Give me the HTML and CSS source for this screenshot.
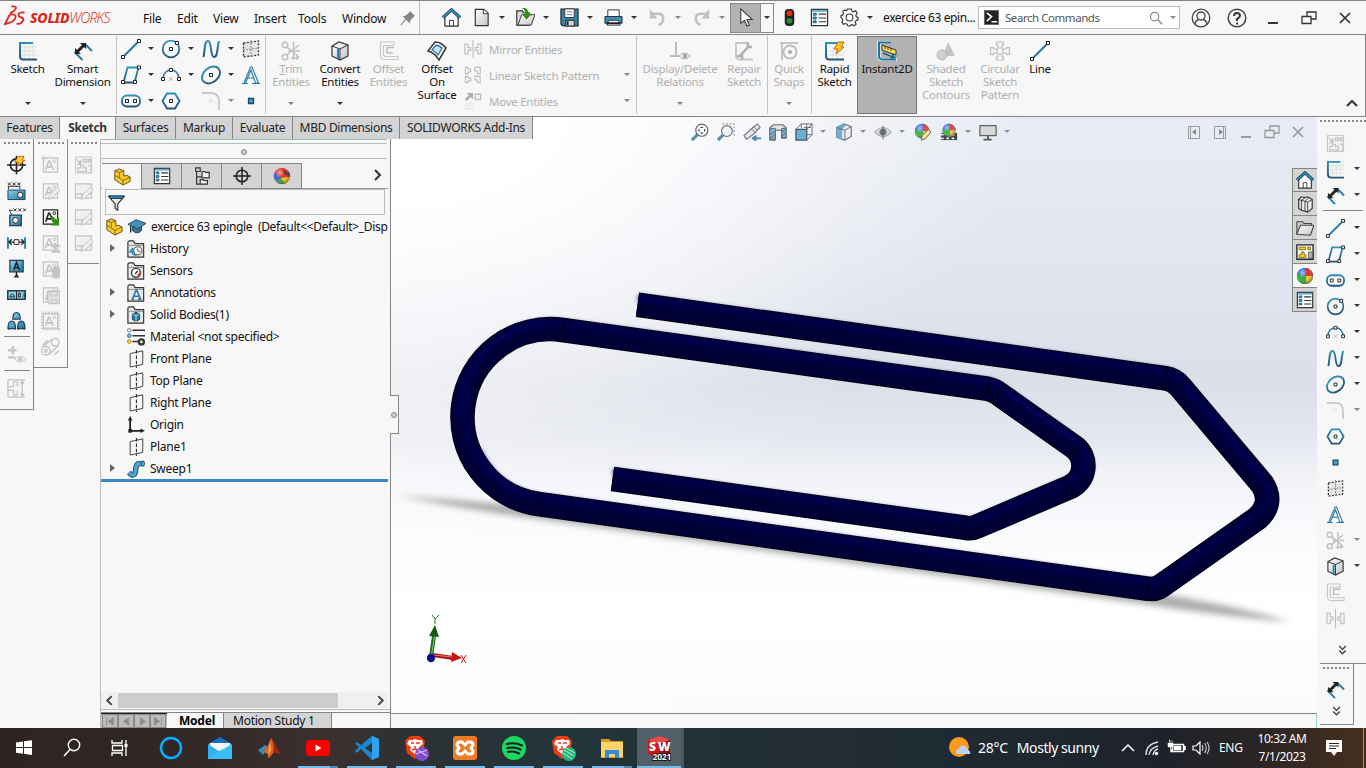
FILE: index.html
```html
<!DOCTYPE html>
<html lang="en">
<head>
<meta charset="utf-8">
<title>SOLIDWORKS - exercice 63 epingle</title>
<link rel="stylesheet" href="styles.css">
</head>
<body>
<svg class="sprite" aria-hidden="true">
<defs>
<linearGradient id="gb" x1="0" y1="0" x2="0" y2="1"><stop offset="0" stop-color="#2f8fb8"/><stop offset="1" stop-color="#245477"/></linearGradient>
<linearGradient id="gf" x1="0" y1="0" x2="1" y2="1"><stop offset="0" stop-color="#8fd0ec"/><stop offset="1" stop-color="#21739c"/></linearGradient>
<linearGradient id="gw" x1="0" y1="0" x2="1" y2="1"><stop offset="0" stop-color="#fff"/><stop offset="1" stop-color="#c4c4c4"/></linearGradient>
<radialGradient id="shine" cx=".35" cy=".3" r=".8"><stop offset="0" stop-color="#fff" stop-opacity=".6"/><stop offset=".4" stop-color="#fff" stop-opacity="0"/><stop offset="1" stop-color="#000" stop-opacity=".6"/></radialGradient>
</defs>
<symbol id="sketch" viewBox="0 0 20 20"><path d="M7 2v17M11 2v17M15 2v17M2 6h17M2 10h17M2 14h17" stroke="#dedede" fill="none"/><path d="M15 2H2v13q0 3.500 3.500 3.500H19" stroke="url(#gb)" stroke-width="2" fill="none"/></symbol>
<symbol id="dim" viewBox="0 0 20 20"><path d="M12 3l7 7M1.500 11l8 8" stroke="#2678a3" stroke-width="2"/><path d="M4 11l7-7" stroke="#222" stroke-width="3"/><path d="M2 7v6h6zM7 2h6v6z" fill="#222"/></symbol>
<symbol id="line" viewBox="0 0 20 20"><path d="M3 17L17 3" stroke="#2678a3" stroke-width="2"/><path d="M.5 16.500h3v3h-3zM16.500.5h3v3h-3z" fill="#fff" stroke="#222"/></symbol>
<symbol id="circle" viewBox="0 0 20 20"><circle cx="10" cy="10" r="8.300" fill="none" stroke="url(#gb)" stroke-width="1.800"/><path d="M8.500 8.500h3v3h-3zM14.500 2.500h3v3h-3z" fill="#fff" stroke="#222"/></symbol>
<symbol id="spline" viewBox="0 0 20 20"><path d="M2.500 18C4 12 3 2 7 2s2 16 6 16 3-10 5-16" fill="none" stroke="url(#gb)" stroke-width="2"/></symbol>
<symbol id="sgrid" viewBox="0 0 20 20"><path d="M2.500 4l15-2v14l-15 2z" fill="#e6e6e6" stroke="#333" stroke-width="1.300" stroke-dasharray="2 1.500"/><path d="M10 1v18M2 11l16-2" stroke="#888" stroke-dasharray="2 1"/></symbol>
<symbol id="rect" viewBox="0 0 20 20"><path d="M6.500 2.500h11l-4 15h-11z" fill="none" stroke="url(#gb)" stroke-width="1.800"/><path d="M.5 15.500h3v3h-3zM12.500 15.500h3v3h-3zM16.500 1h3v3h-3z" fill="#fff" stroke="#222"/></symbol>
<symbol id="arc" viewBox="0 0 20 20"><path d="M2 14C2 2 18 2 18 14" fill="none" stroke="#2678a3" stroke-width="1.500"/><path d="M8 12l4 4m0-4l-4 4" stroke="#bbb"/><path d="M.5 12.500h3v3h-3zM16.500 12.500h3v3h-3zM8.500 3.500h3v3h-3z" fill="#fff" stroke="#222"/></symbol>
<symbol id="ellipse" viewBox="0 0 20 20"><ellipse cx="10" cy="10" rx="10" ry="7.300" transform="rotate(-40 10 10)" fill="none" stroke="url(#gb)" stroke-width="1.900"/><path d="M8.500 8.500h3v3h-3z" fill="#fff" stroke="#222"/></symbol>
<symbol id="atext" viewBox="0 0 20 20"><path d="M1 18.500h6M11 18.500h8M3 18L9.500 2h1.500L17.500 18h-3L10 5 4.500 18M6.500 13h6" fill="none" stroke="#2678a3" stroke-width="1.100"/></symbol>
<symbol id="slot" viewBox="0 0 20 20"><rect x="1" y="4.500" width="18" height="11" rx="5" fill="none" stroke="url(#gb)" stroke-width="1.900"/><path d="M4.500 8.500h3v3h-3zM12.500 8.500h3v3h-3z" fill="#fff" stroke="#222"/></symbol>
<symbol id="poly" viewBox="0 0 20 20"><path d="M1.500 10L6 2.500h8L18.500 10 14 17.500H6z" fill="none" stroke="url(#gb)" stroke-width="1.900"/><path d="M8.500 8.500h3v3h-3z" fill="#fff" stroke="#222"/></symbol>
<symbol id="fillet" viewBox="0 0 20 20"><path d="M1 2h9q8 0 8 9v8" fill="none" stroke="#c8c8c8" stroke-width="1.800"/><path d="M8 8l4 4m0-4l-4 4" stroke="#ddd"/></symbol>
<symbol id="point" viewBox="0 0 20 20"><path d="M7.500 7.500h5v5h-5z" fill="#46a0cc" stroke="#1c4560" stroke-width="1.300"/></symbol>
<symbol id="trim" viewBox="0 0 20 20"><g fill="none" stroke="#c2c2c2" stroke-width="1.600"><circle cx="4" cy="4" r="2.700"/><circle cx="4" cy="16" r="2.700"/><path d="M6 6l12 10M6 14L18 4M12.500 1v18M7 10h12M10 17h8M16 14v5"/></g></symbol>
<symbol id="cube" viewBox="0 0 20 20"><path d="M2 5l7-4 9 3v11l-8 4-8-4z" fill="url(#gw)" stroke="#333" stroke-width="1.200"/><path d="M2 5l8 3 8-4M10 8v11" fill="none" stroke="#333"/><path d="M8 8v10" stroke="#2488b6" stroke-width="2"/></symbol>
<symbol id="offset" viewBox="0 0 20 20"><path d="M15 1H1.500v13.500q0 4 4 4H19v-3H7q-2.500 0-2.500-2.500V4.500H15z" fill="none" stroke="#c8c8c8" stroke-width="1.200"/><path d="M15 6.500H8V12h6" fill="none" stroke="#bcbcbc" stroke-width="1.500"/></symbol>
<symbol id="offsurf" viewBox="0 0 20 20"><path d="M1 10L8 1q6 0 11 6l-7 12Q8 12 1 10z" fill="#fff" stroke="#333" stroke-width="1.500"/><path d="M5 9l4-5q4 1 6 3l-4 7q-2-3-6-5z" fill="#cde7f4" stroke="#2678a3" stroke-width="1.300"/></symbol>
<symbol id="mirror" viewBox="0 0 20 20"><path d="M10 0v20M1 4.500h3.500v4h3v3h-3v4H1zM19 4.500h-3.500v4h-3v3h3v4H19z" fill="none" stroke="#bdbdbd" stroke-width="1.200"/></symbol>
<symbol id="linpat" viewBox="0 0 20 20"><path d="M1.500 1.500h3v2h3v3h-3v2h-3zM12 1.500h6v7h-3v-3h-3zM1.500 11.500h3v2h3v3h-3v2h-3zM12 11.500h6v7h-3v-3h-3z" fill="none" stroke="#bdbdbd" stroke-width="1.200"/></symbol>
<symbol id="move" viewBox="0 0 20 20"><path d="M12.500 2.500h6v6h-6z" fill="none" stroke="#bbb" stroke-width="1.500"/><path d="M2 9l5-5" stroke="#aaa" stroke-width="3"/><path d="M3 1h7v7z" fill="#aaa"/><path d="M2 12h7v7H2zM2 15h7M5 12v7" fill="none" stroke="#d8d8d8" stroke-dasharray="1 1"/></symbol>
<symbol id="disp" viewBox="0 0 20 20"><path d="M6 1v14M0 15h11" stroke="#bbb" stroke-width="1.900"/><path d="M9 15q5-6 11 0-6 6-11 0z" fill="#f7f7f7" stroke="#aaa"/><circle cx="15" cy="15" r="2.300" fill="#aaa"/></symbol>
<symbol id="repair" viewBox="0 0 20 20"><path d="M15 2H2v13q0 3.500 3.500 3.500H19" stroke="#c5c5c5" stroke-width="1.800" fill="none"/><path d="M6 15l8-9m0 0V2m0 4h4M3 15h5v3" stroke="#b0b0b0" stroke-width="2.600" fill="none"/></symbol>
<symbol id="quick" viewBox="0 0 20 20"><path d="M1 2h18M3 1v18" stroke="#c5c5c5" stroke-width="2"/><circle cx="11" cy="11" r="6.500" fill="none" stroke="#bbb" stroke-width="1.800"/><circle cx="11" cy="11" r="2" fill="#aaa"/></symbol>
<symbol id="rapid" viewBox="0 0 20 20"><path d="M8 6v13M12 2v17M2 10h17M2 14h17" stroke="#ddd"/><path d="M12 2H1v13q0 3.500 3.500 3.500H19" stroke="url(#gb)" stroke-width="2" fill="none"/><path d="M13 1h6l-3 5h3l-8 7 2-5H9z" fill="#ffcd1c" stroke="#d45a17"/></symbol>
<symbol id="instant" viewBox="0 0 20 20"><path d="M14 1H2v14q0 4 4 4h14" stroke="#e8f3f9" stroke-width="3.500" fill="none"/><path d="M14 1.500H2V15q0 3.500 3.500 3.500H19" stroke="#24739d" stroke-width="2" fill="none"/><path d="M5 4l14 5v5L5 9z" fill="#ffe35a" stroke="#333"/><path d="M8 5v3m3-2v3m3-2v3" stroke="#333"/><path d="M6 11l9 4v-3l4 5-6 1 1-2-8-3z" fill="#1e618a"/></symbol>
<symbol id="shaded" viewBox="0 0 20 20"><path d="M12 1l7 14H7z" fill="#c2c2c2"/><circle cx="6" cy="14" r="5" fill="#cfcfcf" stroke="#b9b9b9"/></symbol>
<symbol id="circpat" viewBox="0 0 20 20"><path d="M6.500 1h7v3H12v3H8V4H6.500zM6.500 19h7v-3H12v-3H8v3H6.500zM.5 6.500v7h3V12H7V8H3.500V6.500zM19.500 6.500v7h-3V12H13V8h3.500V6.500z" fill="none" stroke="#bcbcbc" stroke-width="1.200"/></symbol>
<symbol id="home" viewBox="0 0 20 20"><path d="M3 9v10h14V9l-7-7z" fill="#fff" stroke="#333" stroke-width="1.300"/><path d="M1 10l9-8 9 8" fill="none" stroke="#17405a" stroke-width="3.400"/><path d="M1 10l9-8 9 8" fill="none" stroke="#3c9bc6" stroke-width="1.400"/><path d="M8 19v-6h4v6" fill="none" stroke="#333"/></symbol>
<symbol id="new" viewBox="0 0 20 20"><path d="M3.500 1.500h9l4.500 4v13H3.500z" fill="url(#gw)" stroke="#333" stroke-width="1.200"/><path d="M12 1.500v4.500h5" fill="#fff" stroke="#333"/></symbol>
<symbol id="open" viewBox="0 0 20 20"><path d="M.8 18V3h6l1 2h6v13z" fill="#ddd" stroke="#333" stroke-width="1.200"/><path d="M2 18L6 7h14l-4 11z" fill="url(#gw)" stroke="#333"/><path d="M6 0q7-1 7 6h4l-6 6-5-6h4q0-4-4-6z" fill="#2f9210"/></symbol>
<symbol id="save" viewBox="0 0 20 20"><path d="M1 1h18v18H3l-2-2z" fill="#3484ab" stroke="#222" stroke-width="1.200"/><path d="M5 1h10v9H5z" fill="#fff" stroke="#333"/><path d="M7 4h6M7 7h6" stroke="#777"/><path d="M6 13h9v6H6z" fill="#d5d5d5" stroke="#222"/><path d="M8 14v4" stroke="#222" stroke-width="2"/></symbol>
<symbol id="print" viewBox="0 0 20 20"><path d="M4 2h12v8H4z" fill="#fff" stroke="#333"/><path d="M1 9h18v7H1z" fill="#3c91bd" stroke="#222"/><path d="M5 13h10l2 5H3z" fill="#fff" stroke="#333"/><path d="M3 16h14" stroke="#123" stroke-width="2"/></symbol>
<symbol id="undo" viewBox="0 0 20 20"><path d="M4 6h6q6 0 6 5t-5 7" fill="none" stroke="#c0c0c0" stroke-width="2.600"/><path d="M2 1v10h8z" fill="#c0c0c0"/></symbol>
<symbol id="cursor" viewBox="0 0 20 20"><path d="M5 1v15l4-3 2.500 6 2.500-1-2.500-6H17z" fill="#fff" stroke="#333" stroke-width="1.100"/></symbol>
<symbol id="traffic" viewBox="0 0 20 20"><rect x="5" y="1" width="10" height="18" rx="4" fill="#222"/><circle cx="10" cy="5.500" r="3" fill="#ee2b12"/><circle cx="10" cy="13.500" r="3" fill="#28902b"/></symbol>
<symbol id="list" viewBox="0 0 20 20"><path d="M1.500 1.500h17v17h-17z" fill="#fff" stroke="#333" stroke-width="1.300"/><path d="M2 2h16v2H2z" fill="#5fb0d4"/><path d="M3.500 5.500h3v2h-3zM3.500 9.500h3v2h-3zM3.500 13.500h3v2h-3z" fill="#4ba6ce" stroke="#1b5d80"/><path d="M9 6.500h8M9 10.500h8M9 14.500h8" stroke="#333" stroke-width="1.200"/></symbol>
<symbol id="gear" viewBox="0 0 20 20"><path d="M8 1h4l.6 2.200 1.700.8L16.500 3 18 5.500l-1.300 2 .3 1.500 2 1v2.500l-2.200.8-.8 1.700 1 2-2 1.700-2-1.200-1.700.5L10.500 19h-2l-1-2-1.700-.7-2.300.8L2 15l1-2-.5-1.500L1 10V8l2-.7.7-1.600L3 3.500 5 2l1.800 1z" fill="#fff" stroke="#333" stroke-width="1.200"/><circle cx="10" cy="10" r="3.600" fill="none" stroke="#333" stroke-width="1.100"/></symbol>
<symbol id="search" viewBox="0 0 20 20"><circle cx="8" cy="8" r="6" fill="none" stroke="currentColor" stroke-width="1.700"/><path d="M12.500 12.500L19 19" stroke="currentColor" stroke-width="2"/></symbol>
<symbol id="user" viewBox="0 0 20 20"><circle cx="10" cy="10" r="8.800" fill="none" stroke="#444" stroke-width="1.300"/><circle cx="10" cy="8" r="4" fill="none" stroke="#444" stroke-width="1.300"/><path d="M4 16q1-4 4-4.500M16 16q-1-4-4-4.500" fill="none" stroke="#444" stroke-width="1.300"/></symbol>
<symbol id="help" viewBox="0 0 20 20"><circle cx="10" cy="10" r="8.800" fill="none" stroke="#444" stroke-width="1.500"/><path d="M7 8q0-3 3-3t3 2.600q0 1.700-3 3.200V13M10 14.500v2" fill="none" stroke="#333" stroke-width="1.900"/></symbol>
<symbol id="min" viewBox="0 0 20 20"><path d="M5 15h10" stroke="currentColor" stroke-width="2"/></symbol>
<symbol id="restore" viewBox="0 0 20 20"><path d="M3 8.500h9v7H3zM8 8V4h9v7h-5" fill="none" stroke="currentColor" stroke-width="1.300"/></symbol>
<symbol id="close" viewBox="0 0 20 20"><path d="M5 5l10 10M15 5L5 15" stroke="currentColor" stroke-width="1.700"/></symbol>
<symbol id="part" viewBox="0 0 20 20"><path d="M2 3l5-2 5 2v6l3-1 4 2v5l-8 4-9-6z" fill="#f8c92b" stroke="#5d4a10"/><path d="M2 3l5 2 5-2M7 5v6l4 3 8-4M11 14v5M2 8l5 3" fill="none" stroke="#7c6315"/></symbol>
<symbol id="conf" viewBox="0 0 20 20"><path d="M3 1h5v4H3zM4 5v14h5M4 11h6" fill="none" stroke="#333" stroke-width="1.300"/><path d="M10 5h3l1 1h4v6h-8zM8 14h3l1 1h4v4H8z" fill="#eee" stroke="#333" stroke-width="1.300"/></symbol>
<symbol id="target" viewBox="0 0 20 20"><circle cx="10" cy="10" r="6.500" fill="none" stroke="#222" stroke-width="1.700"/><path d="M10 0v20M0 10h20" stroke="#222" stroke-width="1.700"/></symbol>
<symbol id="ball" viewBox="0 0 20 20"><circle cx="10" cy="10" r="9" fill="#2464d2"/><path d="M11 10V1q7 1 8 9z" fill="#e12b20"/><path d="M11 10V1Q3 1 1.500 8z" fill="#2f62dc"/><path d="M11 10h8q-1 8-8 9z" fill="#f5d020"/><path d="M11 10L1.300 8Q0 17 9 19h2z" fill="#2cab35"/><circle cx="10" cy="10" r="9" fill="url(#shine)"/></symbol>
<symbol id="ballapp" viewBox="0 0 20 20"><circle cx="10" cy="10" r="9" fill="#e12b20"/><path d="M9 12L2 6q-3 7 2 10z" fill="#2f62dc"/><path d="M9 12l-5 4q4 4 9 3z" fill="#2cab35"/><path d="M9 12l4 7q6-2 6-8z" fill="#f5d020"/><path d="M11 4l7 2 1 5-5-3z" fill="#333"/><circle cx="10" cy="10" r="9" fill="url(#shine)"/></symbol>
<symbol id="funnel" viewBox="0 0 20 20"><path d="M2 3h17l-7 8v7l-3-2v-5z" fill="url(#gw)" stroke="#333" stroke-width="1.300"/><path d="M2 2h17l-2 3H4z" fill="#2d85ad" stroke="#234"/></symbol>
<symbol id="cap" viewBox="0 0 20 20"><path d="M5 9v5q5 5 10 0V9" fill="#2c759b" stroke="#17425c"/><path d="M0 7l9-5 11 4-9 6z" fill="#4590b5" stroke="#17425c"/><path d="M3 9v7" stroke="#222" stroke-width="1.500"/></symbol>
<symbol id="folder" viewBox="0 0 20 20"><path d="M1 19V3q0-2 2-2h4l2 3h9.500v15z" fill="#e9e9e9" stroke="#333" stroke-width="1.300"/><path d="M1 6h17" stroke="#888"/></symbol>
<symbol id="fhist" viewBox="0 0 20 20"><use href="#folder"/><circle cx="12" cy="12" r="4.500" fill="#fff" stroke="#333"/><path d="M12 9.500V12l3 1.500" fill="none" stroke="#333"/><path d="M5.500 12q0 5 5 5M3 13h4.500L6 9.500z" stroke="#2488b6" stroke-width="1.500" fill="none"/></symbol>
<symbol id="fsens" viewBox="0 0 20 20"><use href="#folder"/><circle cx="10" cy="12" r="5" fill="#fff" stroke="#333" stroke-width="1.500"/><path d="M9 13l3-3" stroke="#333" stroke-width="1.500"/><path d="M12 15l3-3" stroke="#e33b1d" stroke-width="2"/></symbol>
<symbol id="fann" viewBox="0 0 20 20"><use href="#folder"/><path d="M5 17h3m4 0h4M6 17l4-10h1l4 10M8 13.500h5" stroke="#2678a3" stroke-width="1.700" fill="none"/></symbol>
<symbol id="fbody" viewBox="0 0 20 20"><use href="#folder"/><path d="M6 9l4-2 4 2v6l-4 2-4-2z" fill="#2678a3" stroke="#153a50"/><path d="M6 9l4 2 4-2m-4 2v6" fill="none" stroke="#bfe3f3"/></symbol>
<symbol id="mat" viewBox="0 0 20 20"><path d="M6 2.500h14M6 8.500h14M6 15h8" stroke="#333" stroke-width="1.700"/><circle cx="2.500" cy="2.500" r="2" fill="#fff" stroke="#777"/><circle cx="2.500" cy="8.500" r="2" fill="#6dbfe4" stroke="#1f6d95"/><circle cx="2.500" cy="15" r="2" fill="#ffd42a" stroke="#a57c0a"/><circle cx="16" cy="15.500" r="2.800" fill="none" stroke="#333" stroke-width="2.500"/></symbol>
<symbol id="plane" viewBox="0 0 20 20"><path d="M3.500 4l14-3v15l-14 3z" fill="none" stroke="#333"/><path d="M10.500 0v20" stroke="#333" stroke-width="1.300" stroke-dasharray="4 2"/></symbol>
<symbol id="origin" viewBox="0 0 20 20"><path d="M3.500 2v14.500h13" fill="none" stroke="#222" stroke-width="2"/><path d="M1 5l2.500-5L6 5zM15 14l5 2.500-5 2.500z" fill="#222"/><path d="M1.500 14.500h4v4h-4z" fill="#222"/></symbol>
<symbol id="sweep" viewBox="0 0 20 20"><path d="M2 14q4 4 6 2c3-3 0-11 5-12h4" fill="none" stroke="#174a66" stroke-width="6"/><path d="M2 14q4 4 6 2c3-3 0-11 5-12h4" fill="none" stroke="#50a6cd" stroke-width="4"/><ellipse cx="17.500" cy="4" rx="2" ry="3" fill="#50a6cd" stroke="#174a66"/></symbol>
<symbol id="note" viewBox="0 0 20 20"><path d="M2.500 2.500h15v15h-15z" fill="#f4f4f4" stroke="currentColor" stroke-width="1.300"/><path d="M5 15l3-9h1l4 9M6.500 12h5" stroke="currentColor" stroke-width="1.700" fill="none"/><circle cx="14" cy="6" r="1.500" fill="none" stroke="currentColor"/></symbol>
<symbol id="pencil" viewBox="0 0 20 20"><path d="M8 19l1-5 8-8 3 3-8 8z" fill="#eee" stroke="currentColor"/></symbol>
<symbol id="tbl" viewBox="0 0 20 20"><path d="M1.500 2.500h17v15h-17zM1.500 13h17M8 13v5M13 13v5" fill="#f0f0f0" stroke="currentColor" stroke-width="1.200"/></symbol>
<symbol id="notestar" viewBox="0 0 20 20"><use href="#note"/><path d="M3 0v7M0 3h7" stroke="currentColor"/></symbol>
<symbol id="notepen" viewBox="0 0 20 20"><use href="#note"/><use href="#pencil"/></symbol>
<symbol id="notearrow" viewBox="0 0 20 20"><use href="#note"/><path d="M10 11l2-2 4 4 3-3v9h-9l3-3z" fill="#2f9210"/></symbol>
<symbol id="noteplus" viewBox="0 0 20 20"><use href="#note"/><path d="M15 10v7M11 13h9M11 19h9" stroke="currentColor" stroke-width="2.500"/></symbol>
<symbol id="notelight" viewBox="0 0 20 20"><use href="#note"/><rect x="12" y="7" width="8" height="13" rx="3" fill="currentColor"/></symbol>
<symbol id="notesave" viewBox="0 0 20 20"><use href="#note"/><path d="M7 6h13v13H9l-2-2z" fill="#e0e0e0" stroke="currentColor" stroke-width="1.500"/><path d="M10 6v5h7V6M11 19v-4h6v4" fill="none" stroke="currentColor"/></symbol>
<symbol id="stamp" viewBox="0 0 20 20"><use href="#note"/><path d="M1.500 1.500h17v17h-17z" fill="none" stroke="currentColor" stroke-width="3" stroke-dasharray="1.500 1.500"/></symbol>
<symbol id="belt" viewBox="0 0 20 20"><g fill="none" stroke="currentColor" stroke-width="1.500"><circle cx="15" cy="5" r="4"/><circle cx="5" cy="14" r="4.500"/><circle cx="5" cy="14" r="1.500"/><path d="M2 10l9-8M8 18l10-9M2 8l5-5M14 18l5-4"/></g></symbol>
<symbol id="block" viewBox="0 0 20 20"><path d="M1.500 1.500h17v17h-17z" fill="#f2f2f2" stroke="currentColor"/><path d="M10 4h3v3h-3zM15 4h2v3h-2zM4 13h3v-2h3v2h3v4H4zM15 11h3v7h-3" fill="none" stroke="currentColor" stroke-width="1.300"/><path d="M2 2l4 4 2-2v6H3l2-2z" fill="currentColor"/></symbol>
<symbol id="tblpen" viewBox="0 0 20 20"><use href="#tbl"/><use href="#pencil"/></symbol>
<symbol id="bolt" viewBox="0 0 20 20"><use href="#target"/><path d="M12 1h6l-2 4h3l-8 6 1-4H8z" fill="#ffd02a" stroke="#d05917"/></symbol>
<symbol id="xxx1" viewBox="0 0 20 20"><path d="M1 1l3 3m0-3L1 4M6 1l3 3m0-3L6 4M11 1l3 3m0-3l-3 3M1.500 8V5h12v3" stroke="#222" fill="none"/><path d="M1 9h18v10H1z" fill="url(#gf)" stroke="#17405a"/><circle cx="14" cy="14" r="2.800" fill="#fff" stroke="#222"/></symbol>
<symbol id="xxx2" viewBox="0 0 20 20"><path d="M7 1l3 3m0-3L7 4M12 1l3 3m0-3l-3 3M17 1l3 3m0-3l-3 3M2 3h4M3 4l3 5" stroke="#222" fill="none"/><path d="M3 8h12v11H3z" fill="url(#gf)" stroke="#17405a" stroke-width="1.400"/><circle cx="9" cy="13.500" r="3" fill="#fff" stroke="#222"/></symbol>
<symbol id="hdim" viewBox="0 0 20 20"><path d="M1 4v12M19 4v12" stroke="#2488b6" stroke-width="2"/><path d="M2 9h16M5 6L2 9l3 3m10-6l3 3-3 3" stroke="#222" fill="none" stroke-width="1.400"/><path d="M7.500 6.500h5v5h-5z" fill="#fff" stroke="#222"/></symbol>
<symbol id="datum" viewBox="0 0 20 20"><path d="M3 1h14v12H3z" fill="url(#gf)" stroke="#17405a" stroke-width="1.300"/><path d="M7 11l3-8 3 8M8 8.500h4M10 13v4" fill="none" stroke="#222" stroke-width="1.500"/><path d="M7 19l3-4 3 4z" fill="#222"/></symbol>
<symbol id="gtol" viewBox="0 0 20 20"><path d="M.8 5.500h18.400v9H.8z" fill="#8bcbe8" stroke="#17405a" stroke-width="1.600"/><path d="M10 5v10M3 12q2.500-6 5 0zM12 8h2v4h-2zM16 12h.5M18 7.500v5" fill="none" stroke="#222"/></symbol>
<symbol id="group" viewBox="0 0 20 20"><path d="M6 8q0-7 4-7t4 7zM1 18q0-8 4-8t4 8zM11 18q0-8 4-8t4 8z" fill="url(#gf)" stroke="#17405a" stroke-width="1.200"/><path d="M1 18h2m4 0h2m2 0h2m4 0h2" stroke="#17405a" stroke-width="2"/></symbol>
<symbol id="pmeye" viewBox="0 0 20 20"><path d="M6 1v9M1 5.500h9M1 13h8" stroke="currentColor" stroke-width="2.500"/><path d="M8 15q6-6 12 0-6 6-12 0z" fill="#eee" stroke="currentColor"/><circle cx="14" cy="15" r="2" fill="currentColor"/></symbol>
<symbol id="limits" viewBox="0 0 20 20"><path d="M1 1h18M1 19h18M1 1v18M1 8h6V3h4v5M1 12h6v5h4v-5M16 3v14M14 5l2-3 2 3M14 15l2 3 2-3" fill="none" stroke="currentColor" stroke-width="1.400"/></symbol>
<symbol id="zfit" viewBox="0 0 20 20"><path d="M8 12l-7 7" stroke="#4685a5" stroke-width="3.500"/><circle cx="12" cy="8" r="6.700" fill="#fff" stroke="#555" stroke-width="1.300"/><path d="M12 3.500l2 2h-4zM12 12.500l2-2h-4zM7.500 8l2-2v4zM16.500 8l-2-2v4z" fill="#333"/></symbol>
<symbol id="zarea" viewBox="0 0 20 20"><path d="M6 1h13v13" fill="none" stroke="#555" stroke-dasharray="2 2"/><path d="M8 12l-7 7" stroke="#4685a5" stroke-width="3.500"/><circle cx="11" cy="9" r="6" fill="#eef3f6" stroke="#666" stroke-width="1.300"/></symbol>
<symbol id="prev" viewBox="0 0 20 20"><path d="M1 14l10-9 5-4 3 4-8 8-7 5z" fill="#e4e4e4" stroke="#666" stroke-width="1.200"/><path d="M9 6l5 5M12 4l4 4" stroke="#666"/><path d="M20 16h-5v-3l-6 4 6 4v-3h5z" fill="#2e7ea8"/></symbol>
<symbol id="section" viewBox="0 0 20 20"><path d="M1 5l4-3h10l4 3v12h-5V8H7v11H1z" fill="#e2e2e2" stroke="#555" stroke-width="1.200"/><path d="M1 6h6v12H1zM14 6h5v10h-5z" fill="#74b2d0" stroke="#456"/><path d="M2 13l4-4M2 17l4-4M14 15l4-4M14 11l4-4" stroke="#345"/></symbol>
<symbol id="orient" viewBox="0 0 20 20"><path d="M1 7h12v12H1z" fill="#5da8cb" stroke="#345" stroke-width="1.400"/><path d="M1 7l6-6h12v12l-6 6M13 7l6-6M7 1v5M13 1v12M10 5h8M13 13h6" fill="none" stroke="#555"/></symbol>
<symbol id="dstyle" viewBox="0 0 20 20"><path d="M2 5l8-4 8 3v11l-7 4-9-3z" fill="#eee" stroke="#556" stroke-width="1.200"/><path d="M2 5l6 2v11l-6-2zM8 7l5-5-4-1-7 4z" fill="#5fa9cc"/><path d="M2 5l9 3 7-4M11 8v11" fill="none" stroke="#556"/></symbol>
<symbol id="eye" viewBox="0 0 20 20"><path d="M1 10q9-10 18 0-9 10-18 0z" fill="#ddd" stroke="#aaa" stroke-width="1.300"/><circle cx="10" cy="10" r="4" fill="#666b74"/><path d="M10 3v15" stroke="#444"/></symbol>
<symbol id="ballpen" viewBox="0 0 20 20"><use href="#ball" width="18" height="18"/><path d="M8 19l1-5 7-7 3 3-7 8z" fill="#f8e28a" stroke="#444"/></symbol>
<symbol id="scene" viewBox="0 0 20 20"><path d="M1 11h18v8H1z" fill="#333"/><path d="M1 13h18M1 17h18" stroke="#eee" stroke-width="2" stroke-dasharray="3 3"/><use href="#ball" x="2" width="16" height="16"/></symbol>
<symbol id="monitor" viewBox="0 0 20 20"><path d="M1 3h18v11H1z" fill="#d5d5d5" stroke="#555" stroke-width="1.400"/><path d="M10 14v4M5 18.500h9" stroke="#444" stroke-width="2"/></symbol>
<symbol id="pleft" viewBox="0 0 20 20"><path d="M4.500 4.500h11v12h-11zM6.500 4v12" fill="none" stroke="#999"/><path d="M12 7v6l-4-3z" fill="#888"/></symbol>
<symbol id="pright" viewBox="0 0 20 20"><path d="M4.500 4.500h11v12h-11zM13.500 4v12" fill="none" stroke="#999"/><path d="M9 7v6l4-3z" fill="#888"/></symbol>
<symbol id="books" viewBox="0 0 20 20"><path d="M3 5l3-3 4 1 2-1 3 1 3 2v10l-5 4-7-2-3-2z" fill="#eee" stroke="#333" stroke-width="1.300"/><path d="M3 5l10 3 5-3M6 6l4-3M10 7l4-4M6 6v11M10 7v11M13 8v11" fill="none" stroke="#333"/></symbol>
<symbol id="ofolder" viewBox="0 0 20 20"><path d="M1 17V3h6l2 2h8v3" fill="#ccc" stroke="#444" stroke-width="1.200"/><path d="M1 17L5 7h15l-4 11z" fill="url(#gw)" stroke="#444" stroke-width="1.200"/></symbol>
<symbol id="palette" viewBox="0 0 20 20"><path d="M1 2h18v16H1z" fill="#fff" stroke="#222" stroke-width="1.500"/><path d="M3.500 4.500h7v3h-7zM13 4.500h3v3h-3zM6 10h3v3h2v3H3.500v-3H6z" fill="#ffd12b" stroke="#7d6514"/><path d="M14 10h4v7h-4z" fill="#bbb" stroke="#555"/></symbol>
</svg>

<header class="titlebar">
  <div class="brand"><svg class="ds" viewBox="0 0 22 22"><path d="M7.500 1.500q5-.5 4.500 1.500-1 3-6 5M5.500 9.500q7-1 6 3-1.500 5-10.500 6.500L5.500 10M20.500 7.500q-6-.500-6 2t3 3 1 4-6 2" fill="none" stroke="#d8281d" stroke-width="1.800"/></svg><span class="solid">SOLID</span><span class="works">WORKS</span></div>
  <nav class="menus"><span>File</span><span>Edit</span><span>View</span><span>Insert</span><span>Tools</span><span>Window</span></nav>
  <svg class="pin" viewBox="0 0 16 16"><path d="M1 15l5-6M4 6l6 6 1-3 4-4-4-4-4 4z" stroke="#858585" fill="#858585" stroke-width="1.200"/></svg>
  <div class="quick">
    <span class="qi"><svg><use href="#home"/></svg></span>
    <span class="qi"><svg><use href="#new"/></svg></span><i class="dn"></i>
    <span class="qi"><svg><use href="#open"/></svg></span><i class="dn"></i>
    <span class="qi"><svg><use href="#save"/></svg></span><i class="dn"></i>
    <span class="qi"><svg><use href="#print"/></svg></span><i class="dn"></i>
    <span class="qi"><svg><use href="#undo"/></svg></span><i class="dn off"></i>
    <span class="qi"><svg class="flip"><use href="#undo"/></svg></span><i class="dn off"></i>
    <span class="select"><b><svg><use href="#cursor"/></svg></b><i class="dn"></i></span>
    <span class="qi"><svg><use href="#traffic"/></svg></span>
    <span class="qi"><svg><use href="#list"/></svg></span>
    <span class="qi"><svg><use href="#gear"/></svg></span><i class="dn"></i>
  </div>
  <span class="docname">exercice 63 epin...</span>
  <div class="searchbox"><svg class="cmd" viewBox="0 0 16 16"><path d="M.5.500h15v15H.5z" fill="#222" stroke="#666"/><path d="M3 3l5 4-5 5M8 12.500h6" fill="none" stroke="#fff" stroke-width="1.800"/></svg><span>Search Commands</span><svg class="mag"><use href="#search"/></svg><i class="dn off"></i></div>
  <div class="winctl"><svg><use href="#user"/></svg><svg><use href="#help"/></svg><svg><use href="#min"/></svg><svg><use href="#restore"/></svg><svg><use href="#close"/></svg></div>
</header>

<section class="ribbon">
  <div class="rb w55"><svg><use href="#sketch"/></svg><p>Sketch</p><i class="dn"></i></div>
  <div class="rb w55"><svg><use href="#dim"/></svg><p>Smart<br>Dimension</p><i class="dn"></i></div>
  <i class="sep s6"></i>
  <div class="rgrid">
    <svg><use href="#line"/></svg><i class="dn"></i><svg><use href="#circle"/></svg><i class="dn"></i><svg><use href="#spline"/></svg><i class="dn"></i><svg><use href="#sgrid"/></svg>
    <svg><use href="#rect"/></svg><i class="dn"></i><svg><use href="#arc"/></svg><i class="dn"></i><svg><use href="#ellipse"/></svg><i class="dn"></i><svg><use href="#atext"/></svg>
    <svg><use href="#slot"/></svg><i class="dn"></i><svg><use href="#poly"/></svg><i></i><svg><use href="#fillet"/></svg><i class="dn off"></i><svg><use href="#point"/></svg>
  </div>
  <i class="sep s2"></i>
  <div class="rb w50 dis"><svg><use href="#trim"/></svg><p><u>T</u>rim<br>Entities</p><i class="dn off"></i></div>
  <div class="rb w48"><svg><use href="#cube"/></svg><p>Convert<br>Entities</p><i class="dn"></i></div>
  <div class="rb w49 dis"><svg><use href="#offset"/></svg><p>Offset<br>Entities</p></div>
  <div class="rb w48"><svg><use href="#offsurf"/></svg><p>Offset<br>On<br>Surface</p></div>
  <div class="rlist">
    <div><svg><use href="#mirror"/></svg><span>Mirror Entities</span></div>
    <div><svg><use href="#linpat"/></svg><span>Linear Sketch Pattern</span><i class="dn off"></i></div>
    <div><svg><use href="#move"/></svg><span>Move Entities</span><i class="dn off"></i></div>
  </div>
  <i class="sep"></i>
  <div class="rb w86 dis"><svg><use href="#disp"/></svg><p>Display/Delete<br>Relations</p><i class="dn off"></i></div>
  <div class="rb w42 dis"><svg><use href="#repair"/></svg><p>Repair<br>Sketch</p></div>
  <i class="sep s2"></i>
  <div class="rb w42 dis"><svg><use href="#quick"/></svg><p>Quick<br>Snaps</p><i class="dn off"></i></div>
  <i class="sep s1"></i>
  <div class="rb w45"><svg><use href="#rapid"/></svg><p>Rapid<br>Sketch</p></div>
  <div class="rb w60 on"><svg><use href="#instant"/></svg><p>Instant2D</p></div>
  <div class="rb w57 dis"><svg><use href="#shaded"/></svg><p>Shaded<br>Sketch<br>Contours</p></div>
  <div class="rb w50 dis"><svg><use href="#circpat"/></svg><p>Circular<br>Sketch<br>Pattern</p></div>
  <div class="rb w30"><svg><use href="#line"/></svg><p>Line</p></div>
  <svg class="collapse" viewBox="0 0 12 8"><path d="M1 7l5-5 5 5" fill="none" stroke="#333" stroke-width="2"/></svg>
</section>

<main class="work">
  <nav class="tabs"><span>Features</span><span class="cur">Sketch</span><span>Surfaces</span><span>Markup</span><span>Evaluate</span><span>MBD Dimensions</span><span>SOLIDWORKS Add-Ins</span></nav>

  <aside class="bars">
    <div class="bar b1"><i class="grip"></i>
      <svg><use href="#bolt"/></svg><svg><use href="#xxx1"/></svg><svg><use href="#xxx2"/></svg><svg><use href="#hdim"/></svg><svg><use href="#datum"/></svg><svg><use href="#gtol"/></svg><svg><use href="#group"/></svg><i class="hr"></i><svg><use href="#pmeye"/></svg><i class="hr"></i><svg><use href="#limits"/></svg></div>
    <div class="bar b2"><i class="grip"></i>
      <svg><use href="#notestar"/></svg><svg><use href="#notepen"/></svg><svg class="dark"><use href="#notearrow"/></svg><svg><use href="#noteplus"/></svg><svg><use href="#notelight"/></svg><svg><use href="#notesave"/></svg><svg><use href="#stamp"/></svg><svg><use href="#belt"/></svg></div>
    <div class="bar b3"><i class="grip"></i>
      <svg><use href="#block"/></svg><svg><use href="#tblpen"/></svg><svg><use href="#tblpen"/></svg><svg><use href="#tblpen"/></svg></div>
  </aside>

  <aside class="panel">
    <div class="ptop"><i class="knob"></i></div>
    <div class="ptabs"><span class="cur"><svg><use href="#part"/></svg></span><span><svg><use href="#list"/></svg></span><span><svg><use href="#conf"/></svg></span><span><svg><use href="#target"/></svg></span><span><svg><use href="#ballapp"/></svg></span><svg class="more" viewBox="0 0 8 12"><path d="M1 1l5 5-5 5" fill="none" stroke="#333" stroke-width="2"/></svg></div>
    <div class="filter"><svg><use href="#funnel"/></svg></div>
    <div class="root"><svg><use href="#part"/></svg><svg><use href="#cap"/></svg><span>exercice 63 epingle&nbsp; (Default&lt;&lt;Default&gt;_Disp</span></div>
    <ul class="tree">
      <li class="ex"><svg><use href="#fhist"/></svg>History</li>
      <li><svg><use href="#fsens"/></svg>Sensors</li>
      <li class="ex"><svg><use href="#fann"/></svg>Annotations</li>
      <li class="ex"><svg><use href="#fbody"/></svg>Solid Bodies(1)</li>
      <li><svg><use href="#mat"/></svg>Material &lt;not specified&gt;</li>
      <li><svg><use href="#plane"/></svg>Front Plane</li>
      <li><svg><use href="#plane"/></svg>Top Plane</li>
      <li><svg><use href="#plane"/></svg>Right Plane</li>
      <li><svg><use href="#origin"/></svg>Origin</li>
      <li><svg><use href="#plane"/></svg>Plane1</li>
      <li class="ex"><svg><use href="#sweep"/></svg>Sweep1</li>
    </ul>
    <div class="rollback"></div>
    <div class="hscroll"><svg viewBox="0 0 8 10"><path d="M6 1L2 5l4 4" fill="none" stroke="#444" stroke-width="1.800"/></svg><i></i><svg viewBox="0 0 8 10"><path d="M2 1l4 4-4 4" fill="none" stroke="#444" stroke-width="1.800"/></svg></div>
    <div class="btabs"><div class="vcr"><svg viewBox="0 0 16 14"><path d="M4 3v9M12 3v9L6 7.500z"/></svg><svg viewBox="0 0 16 14"><path d="M11 3v9L5 7.500z"/></svg><svg viewBox="0 0 16 14"><path d="M6 3v9l6-4.500z"/></svg><svg viewBox="0 0 16 14"><path d="M12 3v9M4 3v9l6-4.500z"/></svg></div><span class="model">Model</span><span class="motion">Motion Study 1</span></div>
  </aside>

  <section class="viewcol">
    <div class="viewport">
      <svg class="scene" viewBox="391 117 926 596">
        <defs><filter id="soft" x="-10%" y="-30%" width="120%" height="160%"><feGaussianBlur stdDeviation="3"/></filter><filter id="soft2"><feGaussianBlur stdDeviation="2.500"/></filter>
        <path id="wire" d="M637.500 304.700L1165.300 378.200Q1174 379.500 1180 386.500L1262.400 484.300Q1274 503 1257.400 518.300L1162.500 585Q1156 590 1148 588.700L538.200 504A87.800 87.800 0 0 1 562.500 330L987.700 388.800Q994 390 999 394L1074.800 447.500C1087 457 1087 479 1070 487L977 526.500Q972 529 965.500 527.800L612.500 479"/></defs>
        <path d="M398 496Q470 500 538 508L1150 592Q1240 606 1290 622Q1220 616 1150 605L538 519Q470 510 398 496z" fill="#777" opacity=".6" filter="url(#soft)"/>
        <g fill="none" stroke-linejoin="round"><use href="#wire" stroke="#00000c" stroke-width="24.600"/><use href="#wire" stroke="#000035" stroke-width="22.800"/><use href="#wire" stroke="#00004e" stroke-width="6" transform="translate(1 -6.500)" filter="url(#soft2)"/></g>
        <g fill="none" stroke="#101060" stroke-width="3" opacity=".7" filter="url(#soft2)"><path d="M545 324A94 94 0 0 0 456 417M480 450A80 80 0 0 0 525 494M1188 388l76 90M1007 393l70 49M1272 490q4 10-1 20M1088 455q6 10 0 20"/></g>
        <path d="M563.700 318l-2.700 24M540 492l-3.500 24M990 377l-3 24M1004 385l-11 18M1081 438l-12 19M1065 476l10 22M973 516l9 21M967 516l-3 23M1167 366l-3 24M1188 379l-15 15M1271 477l-17 15M1251 510l13 17M1156 576l13 18M1150 577l-4 24" stroke="#00000a" stroke-width="1"/>
        <g><path d="M431 657l3-21" stroke="#176b17" stroke-width="4"/><path d="M431.500 655l3-19" stroke="#7fd07f" stroke-width="1"/><path d="M429 636l6-11 4 12z" fill="#125c12"/><path d="M433 655l20 3" stroke="#a81616" stroke-width="4"/><path d="M434 655l18 2" stroke="#ec7070" stroke-width="1"/><path d="M452 652l10 6-11 4z" fill="#c01717"/><circle cx="431" cy="658" r="4.200" fill="#101080"/><path d="M432 615l3 4 4-4M435 619v5" stroke="#178017" fill="none"/><path d="M461 655l5 8M466 655l-5 8" stroke="#e01010"/></g>
      </svg>
      <div class="hud">
        <svg><use href="#zfit"/></svg><svg><use href="#zarea"/></svg><svg><use href="#prev"/></svg><svg><use href="#section"/></svg><svg><use href="#orient"/></svg><i class="dn off"></i><svg><use href="#dstyle"/></svg><i class="dn off"></i><svg><use href="#eye"/></svg><i class="dn off"></i><svg><use href="#ballpen"/></svg><svg><use href="#scene"/></svg><i class="dn off"></i><svg><use href="#monitor"/></svg><i class="dn off"></i>
      </div>
      <div class="docctl"><svg><use href="#pleft"/></svg><svg><use href="#pright"/></svg><svg><use href="#min"/></svg><svg><use href="#restore"/></svg><svg><use href="#close"/></svg></div>
      <div class="split"><i class="knob"></i></div>
      <nav class="taskpane"><span><svg><use href="#home"/></svg></span><span><svg><use href="#books"/></svg></span><span><svg><use href="#ofolder"/></svg></span><span><svg><use href="#palette"/></svg></span><span class="cur"><svg><use href="#ball"/></svg></span><span><svg><use href="#list"/></svg></span></nav>
    </div>
    <div class="underview"></div>
  </section>

  <aside class="rbar">
    <i class="grip"></i>
    <div class="rcell gray"><svg><use href="#block"/></svg></div>
    <div class="rcell"><svg><use href="#sketch"/></svg><i class="dn"></i></div>
    <div class="rcell"><svg><use href="#dim"/></svg><i class="dn"></i></div>
    <i class="hr"></i>
    <div class="rcell"><svg><use href="#line"/></svg><i class="dn"></i></div>
    <div class="rcell"><svg><use href="#rect"/></svg><i class="dn"></i></div>
    <div class="rcell"><svg><use href="#slot"/></svg><i class="dn"></i></div>
    <div class="rcell"><svg><use href="#circle"/></svg><i class="dn"></i></div>
    <div class="rcell"><svg><use href="#arc"/></svg><i class="dn"></i></div>
    <div class="rcell"><svg><use href="#spline"/></svg><i class="dn"></i></div>
    <div class="rcell"><svg><use href="#ellipse"/></svg><i class="dn"></i></div>
    <div class="rcell"><svg><use href="#fillet"/></svg><i class="dn off"></i></div>
    <div class="rcell"><svg><use href="#poly"/></svg></div>
    <div class="rcell"><svg><use href="#point"/></svg></div>
    <div class="rcell"><svg><use href="#sgrid"/></svg></div>
    <div class="rcell"><svg><use href="#atext"/></svg></div>
    <div class="rcell"><svg><use href="#trim"/></svg><i class="dn off"></i></div>
    <div class="rcell"><svg><use href="#cube"/></svg><i class="dn"></i></div>
    <div class="rcell"><svg><use href="#offset"/></svg></div>
    <div class="rcell"><svg><use href="#mirror"/></svg></div>
    <svg class="chev" viewBox="0 0 8 10"><path d="M1 1l3 3 3-3M1 5l3 3 3-3" fill="none" stroke="#445" stroke-width="1.300"/></svg>
    <div class="rbox"><i class="grip"></i><svg><use href="#dim"/></svg><svg class="chev2" viewBox="0 0 8 10"><path d="M1 1l3 3 3-3M1 5l3 3 3-3" fill="none" stroke="#445" stroke-width="1.300"/></svg></div>
  </aside>
</main>

<footer class="taskbar">
  <div class="sys"><svg viewBox="0 0 24 24"><path d="M4 6.500l7-1V11H4zM12 5.300l8-1.100V11h-8zM4 12h7v5.700l-7-1zM12 12h8v7l-8-1.200z" fill="#fff"/></svg></div>
  <div class="sys"><svg viewBox="0 0 24 24"><circle cx="14" cy="9" r="5.700" fill="none" stroke="#fff" stroke-width="1.400"/><path d="M10 13.500L4 20" stroke="#fff" stroke-width="1.500"/></svg></div>
  <div class="sys"><svg viewBox="0 0 24 24"><path d="M4 4v3h10V4M4 20v-3h10v3M4.500 9.500h10v5h-10zM18 4v16" fill="none" stroke="#fff" stroke-width="1.300"/><path d="M16.500 8h3v3h-3z" fill="#fff"/></svg></div>
  <div class="apps">
    <span><svg viewBox="0 0 24 24"><circle cx="12" cy="12" r="10" fill="none" stroke="#0a5fa8" stroke-width="3"/><circle cx="12" cy="12" r="10" fill="none" stroke="#12b5f5" stroke-width="1.800"/></svg></span>
    <span><svg viewBox="0 0 24 24"><path d="M0 8l12-7 12 7v15H0z" fill="#1272c4"/><path d="M2 7h20v8H2z" fill="#f4f6f8"/><path d="M0 8l12 8L24 8v15H0z" fill="#2fb3f0"/><path d="M0 23L14 13l10-5v15z" fill="#45c4f8" opacity=".6"/></svg></span>
    <span><svg viewBox="0 0 24 24"><path d="M1 14l7-5 4 3-6 7z" fill="#3c88b5"/><path d="M6 16q5-5 8-14 4 5 9 16-5-3-7-1-3 5-5 5 1-5-5-6z" fill="#dc6224"/><path d="M14 2q4 7 2 15 3-2 7 1-5-12-9-16z" fill="#9f2415"/><path d="M13 5l-2 13 3-3z" fill="#f9b04a"/></svg></span>
    <span class="run two"><svg viewBox="0 0 24 24"><rect y="4" width="24" height="16" rx="3.500" fill="#f00"/><path d="M9.500 8.500v7l6-3.500z" fill="#fff"/></svg></span>
    <span class="run"><svg viewBox="0 0 24 24"><path d="M17 0l7 3v18l-7 3L6 13l-4 4-2-2 4-4-4-3 2-2 4 3zM17 7l-7 5 7 5z" fill="#1b86d0" fill-rule="evenodd"/><path d="M17 0l7 3v18l-7 3z" fill="#2ca5ee"/></svg></span>
    <span class="run"><svg viewBox="0 0 24 24"><path d="M6 0h10l5 5-2 12-8 6-8-6L1 5z" fill="#f03a16"/><path d="M5 4h4l2-1 3 1h4l1 4-4 3 1 3-5 4-5-4 1-3-4-3z" fill="#fff"/><path d="M7 7h3M12 7h4M11 10v4M8 14l3-1 3 1" stroke="#f03a16" stroke-width="1.500" fill="none"/><circle cx="18" cy="18" r="7" fill="#7950d1"/><path d="M12 18l11-4M14 14l9 6" stroke="#f2afe2" stroke-width="1.200"/></svg></span>
    <span class="run"><svg viewBox="0 0 24 24"><rect width="24" height="24" rx="3" fill="#ef7b22"/><path d="M7 6q-3 0-3 3l2 3-2 3q0 3 3 3h2l3-3 3 3h2q3 0 3-3l-2-3 2-3q0-3-3-3h-2l-3 3-3-3z" fill="none" stroke="#fff" stroke-width="3"/></svg></span>
    <span class="run"><svg viewBox="0 0 24 24"><circle cx="12" cy="12" r="12" fill="#1ed760"/><path d="M5 8q8-2 15 1.500M5.500 12q7-1.500 13 1.500M6 16q6-1.500 11 1.500" fill="none" stroke="#15222a" stroke-width="2.200" stroke-linecap="round"/></svg></span>
    <span class="run"><svg viewBox="0 0 24 24"><path d="M6 0h10l5 5-2 12-8 6-8-6L1 5z" fill="#f03a16"/><path d="M5 4h4l2-1 3 1h4l1 4-4 3 1 3-5 4-5-4 1-3-4-3z" fill="#fff"/><path d="M7 7h3M12 7h4M11 10v4M8 14l3-1 3 1" stroke="#f03a16" stroke-width="1.500" fill="none"/><circle cx="18" cy="18" r="7" fill="#24b47a"/><path d="M13 14l10 6M15 12l9 5M12 17l9 6" stroke="#c6f4df"/></svg></span>
    <span class="run two"><svg viewBox="0 0 24 24"><path d="M1 3h8l2 2h12v17H1z" fill="#d99b22"/><path d="M1 6h22v15H1z" fill="#ffd466"/><path d="M5 22v-8h14v8h-4v-4H9v4z" fill="#328bd4"/></svg></span>
    <span class="run act"><svg viewBox="0 0 24 24"><path d="M1 4l12-4 10 4v14l-11 5-11-5z" fill="#c91820"/><path d="M1 4l12-4 10 4-11 4z" fill="#e74b4b"/><path d="M12 8v15l11-5V4z" fill="#8e0c13"/><text x="2" y="15" class="swl">S</text><text x="11" y="15" class="swl">W</text><text x="5.500" y="23.500" class="swy">2021</text></svg></span>
  </div>
  <div class="weather"><svg viewBox="0 0 24 24"><circle cx="11" cy="11" r="10" fill="#f79a1d"/><path d="M10 18q-3 0-2-3 1-2 3-2 1-4 5-3 3 0 4 4 3 1 2 4z" fill="#bcd3f7"/></svg><span>28°C</span><span class="sky">Mostly sunny</span></div>
  <div class="tray">
    <svg viewBox="0 0 20 20"><path d="M4 13l6-6 6 6" fill="none" stroke="#fff" stroke-width="1.500"/></svg>
    <svg viewBox="0 0 20 20"><path d="M4 17Q4 6 16 4M7 17Q8 10 16 8M11 17q1-5 5-6" fill="none" stroke="#ddd" stroke-width="1.300"/><circle cx="14.500" cy="15.500" r="1.700" fill="#fff"/></svg>
    <svg viewBox="0 0 20 20"><path d="M6.500 6.500h11v7h-11z" fill="none" stroke="#fff" stroke-width="1.300"/><path d="M8 8h7v4H8zM18 8h1.500v4H18zM2 5h5v4H2zM3 2h1v3M6 2v3M4.500 9v5H7" fill="#fff" stroke="#fff" stroke-width=".5"/></svg>
    <svg viewBox="0 0 20 20"><path d="M3 8v4h3l4 4V4L6 8z" fill="none" stroke="#fff" stroke-width="1.200"/><path d="M12 7q2 3 0 6M14.500 5q3.500 5 0 10M17 4q4 6 0 12" fill="none" stroke="#ccc" stroke-width="1.100"/></svg>
  </div>
  <span class="lang">ENG</span>
  <div class="clock"><span>10:32 AM</span><span>7/1/2023</span></div>
  <svg class="msg" viewBox="0 0 18 18"><path d="M1 1h16v12h-5l-3 4-3-4H1z" fill="#fff"/><path d="M4 4.500h10M4 7h10M4 9.500h7" stroke="#2a2220"/></svg>
  <i class="desk"></i>
</footer>
</body>
</html>
```
FILE: styles.css
```css
* { box-sizing: border-box; }
body { margin: 0; width: 1366px; height: 768px; overflow: hidden; display: flex; flex-direction: column; background: #f7f7f7; color: #111; font: 12px/16px "Noto Sans", "Open Sans", sans-serif; letter-spacing: -.2px; white-space: nowrap; }
svg { display: block; flex: none; width: 20px; height: 20px; overflow: visible; }
p, ul { margin: 0; padding: 0; }
i { font-style: normal; }
.sprite { position: absolute; width: 0; height: 0; }
.dn { flex: none; width: 12px; height: 4px; }
.dn::before { content: ""; display: block; width: 0; margin: 0 auto; border: 3px solid transparent; border-top-color: #333; border-bottom: 0; }
.dn.off::before { border-top-color: #858585; }

/* title bar */
.titlebar { flex: none; height: 35px; display: flex; align-items: center; border-top: 1px solid #858585; border-bottom: 1px solid #858585; }
.brand { width: 143px; height: 33px; padding-left: 4px; display: flex; align-items: center; color: #d8281d; font-size: 14px; font-style: italic; }
.ds { width: 22px; height: 22px; margin: -4px 4px 0 0; }
.solid { font-weight: 800; letter-spacing: -.2px; }
.works { font-family: "Open Sans", sans-serif; font-weight: 300; letter-spacing: -.8px; }
.menus { width: 257px; display: grid; grid-template-columns: 34px 36px 41px 44px 44px 58px; padding-top: 2px; }
.pin { width: 15px; height: 15px; margin-top: 1px; }
.quick { display: flex; align-items: center; height: 33px; margin-left: 4px; padding-left: 16px; border-left: 1px solid #bbb; }
.qi { width: 30px; display: flex; justify-content: center; }
.quick svg { width: 19px; height: 19px; }
.quick > .dn { margin-right: 2px; }
.quick > .dn:last-child { margin-right: 7px; }
.flip { transform: scaleX(-1); }
.select { display: flex; align-items: center; width: 44px; height: 30px; border: 1px solid #8a8a8a; }
.select b { width: 30px; height: 28px; display: flex; align-items: center; justify-content: center; background: #b2b2b2; border-right: 1px solid #8a8a8a; }
.docname { width: 95px; padding-top: 1px; letter-spacing: -.4px; }
.searchbox { width: 202px; height: 23px; display: flex; align-items: center; padding-left: 5px; border: 1px solid #bbb; background: #fff; color: #555; }
.cmd { width: 15px; height: 15px; margin-right: 6px; }
.searchbox span { width: 144px; font-size: 11.5px; letter-spacing: -.45px; padding-top: 1px; }
.searchbox .mag { width: 14px; height: 14px; color: #888; }
.searchbox .dn { margin-left: 4px; }
.winctl { display: flex; gap: 16px; margin-left: 11px; color: #333; }

/* ribbon */
.ribbon { flex: none; height: 82px; display: flex; border-right: 1px solid #858585; border-bottom: 1px solid #858585; position: relative; font-size: 11.5px; letter-spacing: -.25px; }
.rb { height: 78px; margin-top: 1px; padding-top: 5px; display: flex; flex-direction: column; align-items: center; text-align: center; line-height: 13px; position: relative; }
.rb p { margin-top: 1px; }
.rb .dn { position: absolute; top: 66px; }
.rb.dis { color: #b0b0b0; }
.rb.on { background: #b2b2b2; border: 1px solid #777; padding-top: 4px; }
.w30 { width: 30px; } .w42 { width: 42px; } .w45 { width: 45px; } .w48 { width: 48px; } .w49 { width: 49px; } .w50 { width: 50px; } .w55 { width: 55px; } .w57 { width: 58px; } .w60 { width: 60px; } .w86 { width: 86px; }
.sep { flex: none; width: 1px; height: 78px; margin-top: 1px; background: #c4c4c4; }
.s1 { margin-left: 1px; } .s2 { margin-left: 2px; } .s6 { margin-left: 6px; }
.rgrid { display: grid; grid-template-columns: 24px 16px 24px 16px 24px 16px 24px; grid-auto-rows: 26px; align-items: center; justify-items: center; margin: 1px 0 0 2px; }
.rlist { width: 175px; padding: 1px 0 0 3px; color: #b0b0b0; }
.rlist div { height: 26px; display: flex; align-items: center; }
.rlist svg { width: 18px; height: 18px; }
.rlist span { flex: 1; padding-left: 7px; padding-top: 1px; }
.rlist .dn { margin-right: 3px; }
.collapse { position: absolute; right: 7px; bottom: 9px; width: 12px; height: 8px; }

/* work area */
.work { flex: none; height: 611px; display: flex; position: relative; }
.tabs { position: absolute; left: 0; top: 0; z-index: 2; display: grid; grid-template-columns: 60px 56px 60px 57px 60px 107px 133px; height: 22px; border-bottom: 1px solid #858585; line-height: 22px; text-align: center; color: #222; letter-spacing: -.3px; }
.tabs span { background: #d4d4d4; border-right: 1px solid #858585; }
.tabs .cur { background: #f7f7f7; font-weight: 700; color: #333; }
.bars { width: 100px; display: flex; align-items: flex-start; padding-top: 22px; }
.bar { display: flex; flex-direction: column; align-items: center; color: #c4c4c4; border-bottom: 1px solid #858585; }
.bar svg { margin-bottom: 6px; width: 19px; height: 20px; }
.bar svg.dark { color: #222; }
.b1, .b2 { width: 34px; border-right: 1px solid #858585; }
.b1 { height: 271px; } .b2 { height: 229px; } .b3 { width: 31px; height: 125px; }
.grip { flex: none; width: 26px; height: 3px; margin: 3px 0 10px; background: repeating-linear-gradient(90deg, #888 0 2px, transparent 2px 4px); border-bottom: 1px solid #f7f7f7; }
.hr { flex: none; height: 1px; width: 26px; background: #858585; }
.b1 .hr { margin: -1px 0 8px; }
.b1 .hr + svg { height: 19px; margin-bottom: 7px; }

.panel { width: 291px; padding-top: 22px; border-left: 1px solid #bbb; border-right: 1px solid #858585; display: flex; flex-direction: column; }
.ptop { width: 286px; height: 20px; border-top: 1px solid #9cb9bd; border-bottom: 1px solid #bbb; display: flex; align-items: center; justify-content: center; background: linear-gradient(#f7f7f7 3px, #bbb 3px, #bbb 4px, #f7f7f7 4px); }
.knob { width: 6px; height: 6px; border: 1px solid #888; border-radius: 50%; background: #ccc; }
.ptop .knob { margin-top: 5px; }
.ptabs { height: 26px; margin-top: 4px; padding-left: 1px; display: flex; align-items: flex-start; border-bottom: 1px solid #999; width: 287px; }
.ptabs span { width: 40px; height: 26px; display: flex; align-items: center; justify-content: center; background: #d4d4d4; border: 1px solid #858585; border-left: 0; }
.ptabs .cur { background: #f7f7f7; border-bottom: 0; }
.ptabs svg { width: 18px; height: 18px; }
.ptabs .more { width: 8px; height: 12px; margin: 6px 0 0 72px; }
.filter { width: 280px; height: 26px; margin: 0 0 0 4px; border: 1px solid #bbb; padding: 4px 1px; }
.filter svg { width: 18px; height: 18px; }
.root { height: 23px; padding-left: 4px; display: flex; align-items: center; overflow: hidden; width: 287px; letter-spacing: -.32px; }
.root svg { width: 18px; height: 18px; margin-right: 4px; }
.root svg + svg { width: 20px; }
.tree { list-style: none; letter-spacing: -.26px; }
.tree li { height: 22px; padding-left: 26px; display: flex; align-items: center; position: relative; }
.tree li svg { width: 18px; height: 18px; margin-right: 5px; }
.ex::before { content: ""; position: absolute; left: 9px; top: 6px; border: 4px solid transparent; border-left: 5px solid #666; border-right: 0; }
.rollback { width: 287px; height: 3px; margin-top: -1px; background: #388ac4; }
.hscroll { width: 287px; height: 16px; margin-top: auto; padding: 0 3px 0 4px; display: flex; align-items: center; background: #f0f0f0; }
.hscroll svg { width: 9px; height: 11px; }
.hscroll i { width: 220px; height: 15px; margin: 0 38px 0 4px; background: #cdcdcd; }
.btabs { height: 15px; margin-top: 5px; display: flex; line-height: 15px; box-shadow: 0 -1px #858585, 0 -3px #f7f7f7, 0 -4px #bbb; }
.vcr { display: flex; width: 66px; background: #bbb; border-top: 1px solid #222; padding: 0 1px; }
.vcr svg { width: 16px; height: 14px; border: 1px solid #888; }
.vcr path { fill: #8e8e8e; stroke: #8e8e8e; }
.model { width: 56px; text-align: center; font-weight: 700; color: #000; padding-left: 4px; }
.motion { width: 109px; padding-left: 9px; background: #d4d4d4; border: 1px solid #858585; border-width: 0 1px; letter-spacing: -.25px; }

.viewcol { width: 926px; }
.viewport { height: 596px; position: relative; background: radial-gradient(ellipse 640px 330px at 0 0, #fff 25%, rgba(255,255,255,0) 100%), linear-gradient(90deg, rgba(255,255,255,.4), rgba(255,255,255,0) 50%), linear-gradient(#e9ecf4, #e0e3ed 32%, #dcdfe9 45%, #e4e7ef 54%, #f0f2f7 60%, #f7f8fb 66%, #fcfdfe 75%, #fff 84%, #fafbfd); }
.scene { position: absolute; left: 0; top: 0; width: 926px; height: 596px; overflow: hidden; }
.underview { height: 15px; border-top: 1px solid #858585; border-right: 1px solid #9cc; }
.hud { position: absolute; left: 300px; top: 6px; display: flex; align-items: center; opacity: .9; }
.hud svg { width: 18px; height: 18px; margin-right: 8px; }
.hud .dn { margin: 0 5.500px 0 -4px; }
.docctl { position: absolute; left: 793px; top: 5px; display: flex; gap: 6px; color: #999; }
.split { position: absolute; left: -1px; top: 278px; width: 9px; height: 39px; display: flex; align-items: center; justify-content: center; border: 1px solid #858585; border-left: 0; background: #f7f7f7; }
.taskpane { position: absolute; right: 0; top: 51px; width: 25px; border: 1px solid #858585; border-right: 0; }
.taskpane span { display: flex; height: 24px; align-items: center; justify-content: center; background: #d4d4d4; border-bottom: 1px solid #858585; }
.taskpane span:first-child { height: 23px; }
.taskpane span:last-child { height: 23px; border: 0; }
.taskpane .cur { background: #f7f7f7; }
.taskpane svg { width: 18px; height: 18px; }

.rbar { width: 49px; padding-left: 3px; display: flex; flex-direction: column; }
.rbar > .grip { width: 46px; margin: 3px 0 7px; }
.rcell { height: 26px; padding-left: 6px; display: flex; align-items: center; }
.rcell svg { width: 19px; height: 19px; }
.rcell .dn { margin-left: 6px; }
.gray { color: #c4c4c4; }
.rbar > .hr { width: 40px; margin: 2px 0 4px 3px; }
.chev { width: 9px; height: 11px; margin: 14px 0 0 18px; }
.rbox { width: 46px; height: 62px; margin-top: 7px; border-top: 1px solid #858585; background: linear-gradient(#858585, #858585) 33px 0 / 1px 100% no-repeat, linear-gradient(#858585, #858585) 0 100% / 33px 1px no-repeat; }
.rbox .grip { display: block; margin: 3px 3px 10px; }
.rbox svg { margin-left: 6px; width: 19px; height: 19px; }
.rbox .chev2 { width: 9px; height: 11px; margin: 7px 0 0 12px; }

/* taskbar */
.taskbar { flex: none; height: 40px; display: flex; align-items: center; color: #fff; background: linear-gradient(90deg, #2e2422, #302725 12%, #3b302f 24%, #2b3234 31%, #22353a 42%, #222d33 60%, #1e2a33 70%, #1e222b 85%, #2a2424 92%, #47301f); letter-spacing: 0; }
.sys { width: 48px; display: flex; justify-content: center; }
.sys svg { width: 24px; height: 24px; }
.apps { display: flex; margin-left: 2px; }
.apps span { width: 49px; height: 40px; display: flex; align-items: center; justify-content: center; }
.apps svg { width: 24px; height: 24px; }
.run { background: linear-gradient(#76b9ed, #76b9ed) 5px 100% / 40px 2px no-repeat; }
.two { background: linear-gradient(90deg, #76b9ed 32px, #5487ab 32px) 5px 100% / 40px 2px no-repeat; }
.apps .act { background: linear-gradient(#76b9ed, #76b9ed) 0 100% / 100% 2px no-repeat #52606a; width: 47px; margin-left: 1px; border-right: 3px solid #48565d; }
.swl { font: 800 12px "Open Sans", sans-serif; fill: #fff; }
.swy { font: 700 8.500px "Open Sans", sans-serif; fill: #fff; stroke: #000; stroke-width: 1.500px; paint-order: stroke; letter-spacing: -.2px; }
.weather { display: flex; align-items: center; margin-left: 264px; width: 169px; font-size: 14px; }
.weather svg { width: 24px; height: 24px; margin-right: 6px; }
.weather span { letter-spacing: -.25px; }
.weather .sky { margin-left: 9px; letter-spacing: -.45px; }
.tray { display: flex; gap: 4px; margin-left: 1px; }
.lang { width: 38px; margin-left: 9px; font-size: 12px; letter-spacing: -.3px; }
.clock { width: 50px; margin-left: 0; display: flex; flex-direction: column; align-items: center; line-height: 18px; letter-spacing: -.4px; }
.msg { width: 18px; height: 18px; margin-left: 18px; }
.desk { width: 1px; height: 40px; margin-left: 20px; background: #9a8a82; }
```
